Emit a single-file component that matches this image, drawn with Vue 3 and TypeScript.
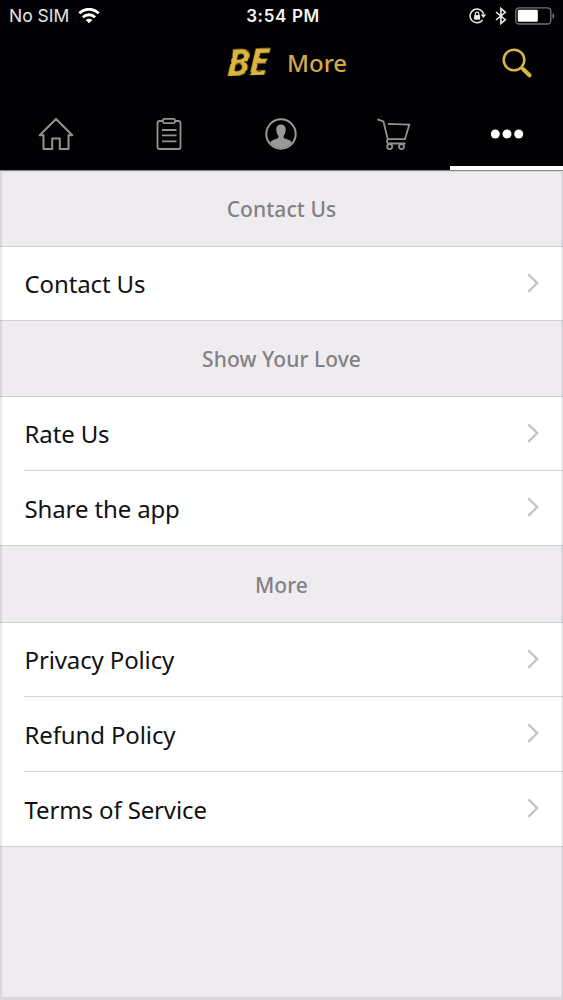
<script setup lang="ts">
interface Row { label: string; size: string }
interface Section { title: string; size: string; rows: Row[] }

const sections: Section[] = [
  { title: 'Contact Us', size: 'head', rows: [{ label: 'Contact Us', size: 'short' }] },
  {
    title: 'Show Your Love',
    size: 'head',
    rows: [
      { label: 'Rate Us', size: 'short' },
      { label: 'Share the app', size: 'tall' },
    ],
  },
  {
    title: 'More',
    size: 'head-tall',
    rows: [
      { label: 'Privacy Policy', size: 'short' },
      { label: 'Refund Policy', size: 'tall' },
      { label: 'Terms of Service', size: 'tall' },
    ],
  },
]
</script>

<template>
  <div class="phone">
    <header class="top">
      <div class="status">
        <div class="status-left">
          <span class="carrier">No SIM</span>
          <svg width="22" height="16" viewBox="0 0 22 16" fill="none" stroke="#fff" stroke-width="2.9">
            <path d="M1.3 5.3C6.800 -.1 15.200 -.1 20.700 5.300" />
            <path d="M4.900 9.200C8.300 5.900 13.700 5.900 17.100 9.200" />
            <path d="M7.700 11.900C9.600 10.200 12.400 10.200 14.300 11.900L11 15.200Z" fill="#fff" stroke="none" />
          </svg>
        </div>
        <span class="clock">3:54 PM</span>
        <div class="status-right">
          <svg width="18" height="16" viewBox="0 0 18 16" fill="none" stroke="#eee" stroke-width="1.5">
            <path d="M13.600 11.900A6.900 6.900 0 1 1 14.700 6.200" />
            <path d="M11.800 6.400H17.200L14.500 10Z" fill="#eee" stroke="none" />
            <rect x="5.100" y="7.100" width="6" height="4.500" fill="#eee" stroke="none" />
            <path d="M6.400 7.300V5.800a1.700 1.700 0 0 1 3.400 0V7.300" stroke-width="1.200" />
          </svg>
          <svg width="12" height="18" viewBox="0 0 12 18" fill="none" stroke="#eee" stroke-width="1.600">
            <path d="M1 5L10.300 12.700L5.900 16.500V1.500L10.300 5.300L1 13" />
          </svg>
          <svg class="battery" width="40" height="18" viewBox="0 0 40 18">
            <rect x=".8" y=".8" width="35" height="16.200" rx="3.500" fill="none" stroke="#77777a" stroke-width="1.300" />
            <rect x="2.800" y="2.800" width="20" height="12" rx="1" fill="#fff" />
            <path d="M37.500 6Q39.300 7 39.300 9T37.500 12Z" fill="#77777a" />
          </svg>
        </div>
      </div>

      <div class="title-bar">
        <svg class="filters" width="0" height="0" aria-hidden="true">
          <filter id="brush" x="-10%" y="-10%" width="120%" height="120%">
            <feTurbulence type="fractalNoise" baseFrequency=".07 .2" numOctaves="2" seed="4" />
            <feDisplacementMap in="SourceGraphic" scale="2.5" xChannelSelector="R" yChannelSelector="G" />
          </filter>
        </svg>
        <span class="logo"><span class="letter-b">B</span><span class="letter-e">E</span></span>
        <h1>More</h1>
        <svg class="search" width="31" height="31" viewBox="0 0 31 31" fill="none" stroke="#d9b443">
          <circle cx="12" cy="12" r="10.300" stroke-width="2.500" />
          <path d="M19 19.300L21 21.300" stroke-width="2.500" />
          <path d="M21.500 21.500L27.500 27.300" stroke-width="4.200" stroke-linecap="round" />
        </svg>
      </div>

      <nav class="tabs">
        <div class="tab">
          <svg width="36" height="34" viewBox="0 0 36 34" fill="none" stroke="#929292" stroke-width="2" stroke-linejoin="round">
            <path d="M18 2L1.700 18.300H5.500V32H14.200V21.400H21.800V32H30.500V18.300H34.300Z" />
          </svg>
        </div>
        <div class="tab">
          <svg width="26" height="34" viewBox="0 0 26 34" fill="none" stroke="#929292" stroke-width="1.800">
            <path d="M7 4H3.500Q1.500 4 1.500 6V30Q1.500 32 3.500 32H22.500Q24.500 32 24.500 30V6Q24.500 4 22.500 4H19" />
            <rect x="7" y="1.800" width="12" height="4.300" rx="1.500" />
            <path d="M6 13H20.500M6 18.300H20.500M6 24.300H20.500" />
          </svg>
        </div>
        <div class="tab">
          <svg width="34" height="34" viewBox="0 0 34 34">
            <circle cx="17" cy="17" r="14.700" fill="none" stroke="#999" stroke-width="2" />
            <path d="M17 7.500C13.900 7.500 12.200 9.600 12.300 12.700C12.400 15.500 13.200 17.500 14.500 18.900C14.600 20.500 14 21.200 12.500 21.800L8.500 23.300Q6.700 24 6.200 25.500Q10.200 31 17 31T27.800 25.500Q27.300 24 25.500 23.300L21.500 21.800C20 21.200 19.400 20.500 19.500 18.900C20.800 17.500 21.600 15.500 21.700 12.700C21.800 9.600 20.100 7.500 17 7.500Z" fill="#999" />
          </svg>
        </div>
        <div class="tab">
          <svg width="34" height="34" viewBox="0 0 34 34" fill="none" stroke="#929292" stroke-width="1.800">
            <path d="M.3 2.300L6.500 4.500L10.700 22.200H28L32.300 7.500L10.800 6.900" />
            <path d="M10.700 22.200Q9 26 11.500 26.500H28.500" />
            <circle cx="12.700" cy="29.600" r="2.500" />
            <circle cx="24.500" cy="29.600" r="2.500" />
          </svg>
        </div>
        <div class="tab active">
          <svg width="34" height="10" viewBox="0 0 34 10" fill="#fff">
            <circle cx="5.300" cy="5" r="4.500" />
            <circle cx="17" cy="5" r="4.500" />
            <circle cx="28.700" cy="5" r="4.500" />
          </svg>
        </div>
      </nav>
    </header>

    <main class="content">
      <section v-for="section in sections" :key="section.title">
        <h2 :class="section.size">{{ section.title }}</h2>
        <div class="rows">
          <div v-for="row in section.rows" :key="row.label" class="row" :class="row.size">
            <span>{{ row.label }}</span>
            <svg width="14" height="22" viewBox="0 0 14 22" fill="none" stroke="#c3c3c5" stroke-width="2.200">
              <path d="M2.300 1.300L11.300 10.100L2.300 18.900" />
            </svg>
          </div>
        </div>
      </section>
    </main>
  </div>
</template>

<style>
body { margin: 0; }
</style>

<style scoped>
.phone {
  width: 563px;
  height: 1000px;
  display: flex;
  flex-direction: column;
  overflow: hidden;
  background: #eeecef;
  font-family: "Noto Sans", sans-serif;
}
svg { display: block; flex: none; }
.top { height: 171px; background: #010002; flex: none; box-sizing: border-box; border-bottom: 1px solid #8b878c; }
.status {
  height: 32px;
  display: grid;
  grid-template-columns: 1fr auto 1fr;
  align-items: center;
  padding: 0 8px 0 9px;
  color: #f5f5f5;
  font: 17.5px/32px Inter, sans-serif;
}
.status-left, .status-right { display: flex; align-items: center; }
.status-left { gap: 9px; }
.carrier { color: #e5e5e5; }
.clock { font-weight: 600; font-size: 17px; letter-spacing: .65px; padding-left: 2px; }
.status-right { justify-content: flex-end; gap: 8px; }
.title-bar { height: 64px; display: flex; align-items: center; padding: 0 30px 0 228px; }
.filters { position: absolute; }
.logo {
  display: flex;
  width: 59px;
  color: #dab641;
  font: italic 700 37px/40px "Open Sans", sans-serif;
  transform: translate(-1px, -3px) rotate(-2deg);
  filter: url(#brush);
}
.letter-b { transform: skewX(-3deg); }
.letter-e { margin-left: -1px; transform: skewX(-3deg); }
h1 { margin: 0; color: #d0aa4c; font-size: 24px; font-weight: 500; line-height: 32px; padding-bottom: 2px; }
.search { margin-left: auto; margin-bottom: 1px; }
.tabs { height: 74px; display: grid; grid-template-columns: repeat(5, 1fr); }
.tab { display: flex; align-items: center; justify-content: center; box-sizing: border-box; padding: 2px 0 0; }
.tab.active { border-bottom: 4px solid #fff; padding: 6px 0 0; }
.content {
  flex: 1;
  background: #eeecef;
  position: relative;
}
.content::after {
  content: "";
  position: absolute;
  inset: 0;
  border: solid rgba(110, 105, 115, .15);
  border-width: 1px 2px 3px;
  pointer-events: none;
}
h2 {
  margin: 0;
  height: 76px;
  box-sizing: border-box;
  border-bottom: 1px solid #d2d0d3;
  color: #838185;
  font-size: 21px;
  font-weight: 550;
  letter-spacing: .08px;
  line-height: 76px;
  text-align: center;
}
h2.head-tall { height: 77px; line-height: 78px; }
.rows { background: #fff; border-bottom: 1px solid #d2d0d3; }
.row {
  height: 74px;
  margin-left: 24px;
  padding-right: 23px;
  box-sizing: border-box;
  display: flex;
  align-items: center;
  justify-content: space-between;
  border-bottom: 1px solid #d5d3d6;
  color: #111;
  font-size: 24px;
  letter-spacing: -.13px;
}
.row span { margin-left: .5px; }
.row.tall { height: 75px; }
.row:last-child { border-bottom: 0; height: 73px; }
.row.tall:last-child { height: 74px; }
</style>
